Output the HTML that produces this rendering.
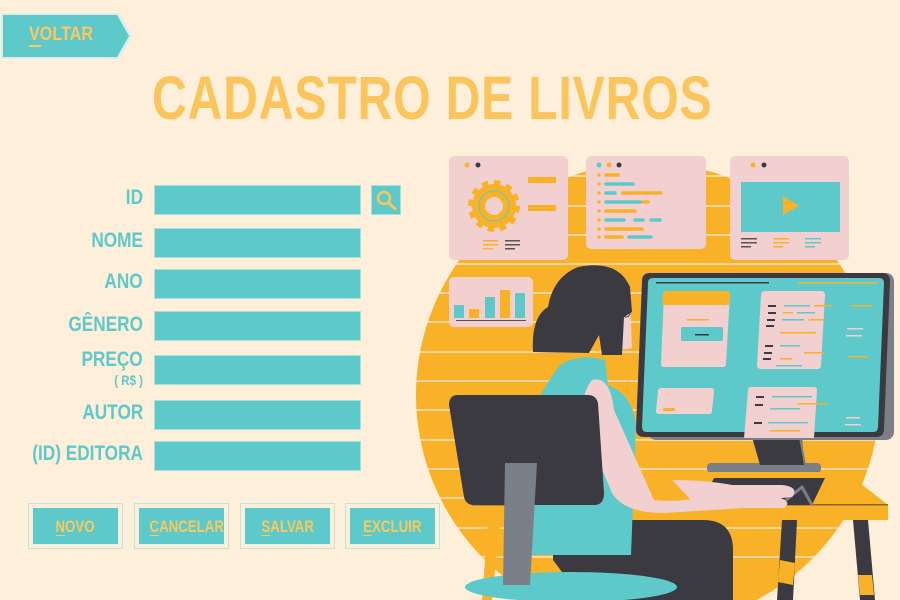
<!DOCTYPE html>
<html><head><meta charset="utf-8"><style>
*{margin:0;padding:0;box-sizing:border-box}
body{width:900px;height:600px;background:#FEEFDA;position:relative;overflow:hidden;font-family:"Liberation Sans Narrow","Liberation Sans",sans-serif}
.abs{position:absolute}
.lbl{position:absolute;right:757px;color:#5DC9CB;font-weight:bold;font-size:21px;white-space:nowrap;transform-origin:right center;transform:scaleX(.82)}
.inp{position:absolute;left:154px;width:207px;height:30px;background:#5DC9CB;border:1px solid #A8E0DE}
.btn{position:absolute;top:503px;width:95px;height:46px;border:1px solid #BFE3DE;background:#FEEFDA}
.btn div{position:absolute;left:3px;top:3px;right:3px;bottom:3px;background:#5DC9CB;border:1px solid #F4F0DC;color:#FBC95E;font-weight:bold;font-size:17px;text-align:center;line-height:38px;white-space:nowrap;overflow:hidden}
.btn span{display:inline-block;transform:scaleX(.78)}
u{text-decoration:underline;text-underline-offset:3px}
</style></head><body>
<svg class="abs" style="left:0;top:0" width="140" height="62"><polygon points="1,13 119,13 132,36 119,59 1,59" fill="#D9EFE8"/><polygon points="3,15 117,15 129,36 117,57 3,57" fill="#5DC9CB"/></svg>
<div class="abs" style="left:29px;top:24px;color:#FBC95E;font-weight:bold;font-size:19px;transform:scaleX(.85);transform-origin:left">VOLTAR</div>
<div class="abs" style="left:29px;top:45px;width:12px;height:2px;background:#FBC95E"></div>
<div class="abs" style="left:152px;top:63px;color:#FBC55E;font-weight:bold;font-size:61px;white-space:nowrap;transform:scaleX(.79);transform-origin:left;letter-spacing:1px">CADASTRO DE LIVROS</div>

<div class="lbl" style="top:186px">ID</div>
<div class="lbl" style="top:229px">NOME</div>
<div class="lbl" style="top:270px">ANO</div>
<div class="lbl" style="top:313px">GÊNERO</div>
<div class="lbl" style="top:348px">PREÇO</div>
<div class="lbl" style="top:372px;font-size:14px">( R$ )</div>
<div class="lbl" style="top:401px">AUTOR</div>
<div class="lbl" style="top:442px">(ID) EDITORA</div>

<div class="inp" style="top:185px"></div>
<div class="inp" style="top:228px"></div>
<div class="inp" style="top:269px"></div>
<div class="inp" style="top:311px"></div>
<div class="inp" style="top:355px"></div>
<div class="inp" style="top:400px"></div>
<div class="inp" style="top:441px"></div>
<div class="abs" style="left:371px;top:185px;width:30px;height:30px;background:#5DC9CB;border:1px solid #A8E0DE">
<svg width="30" height="30"><circle cx="12" cy="12" r="6" fill="none" stroke="#FBC55E" stroke-width="2.5"/><line x1="16.5" y1="16.5" x2="23" y2="23" stroke="#FBC55E" stroke-width="3" stroke-linecap="round"/></svg></div>

<div class="btn" style="left:28px"><div><span><u>N</u>OVO</span></div></div>
<div class="btn" style="left:134px"><div><span><u>C</u>ANCELAR</span></div></div>
<div class="btn" style="left:240px"><div><span><u>S</u>ALVAR</span></div></div>
<div class="btn" style="left:345px"><div><span><u>E</u>XCLUIR</span></div></div>

<svg class="abs" style="left:0;top:0" width="900" height="600">
<defs><clipPath id="c"><circle cx="648" cy="395" r="232"/></clipPath></defs>
<circle cx="648" cy="395" r="232" fill="#F9B128"/>
<g clip-path="url(#c)" stroke="#FCE3C2" stroke-width="1.5">
<line x1="400" y1="176" x2="900" y2="176"/><line x1="400" y1="206" x2="900" y2="206"/><line x1="400" y1="235" x2="900" y2="235"/><line x1="400" y1="264" x2="900" y2="264"/><line x1="400" y1="293" x2="900" y2="293"/><line x1="400" y1="322" x2="900" y2="322"/><line x1="400" y1="352" x2="900" y2="352"/><line x1="400" y1="381" x2="900" y2="381"/><line x1="400" y1="410" x2="900" y2="410"/><line x1="400" y1="440" x2="900" y2="440"/><line x1="400" y1="469" x2="900" y2="469"/><line x1="400" y1="498" x2="900" y2="498"/><line x1="400" y1="528" x2="900" y2="528"/><line x1="400" y1="557" x2="900" y2="557"/>
</g>
<rect x="449" y="156" width="119" height="104" rx="5" fill="#F2D0D0"/>
<rect x="586" y="156" width="120" height="93" rx="5" fill="#F2D0D0"/>
<rect x="730" y="156" width="119" height="104" rx="5" fill="#F2D0D0"/>
<rect x="449" y="277" width="84" height="50" rx="5" fill="#F2D0D0"/>
<circle cx="467" cy="165" r="2.5" fill="#F9B128"/><circle cx="478" cy="165" r="2.5" fill="#3A3A40"/>
<circle cx="494" cy="206" r="22" fill="#F9B128" stroke="#F9B128" stroke-width="8" stroke-dasharray="6 5.5"/>
<circle cx="494" cy="206" r="15" fill="none" stroke="#5DC9CB" stroke-width="1"/><circle cx="494" cy="206" r="9" fill="#F2D0D0"/>
<rect x="528" y="177" width="28" height="6" fill="#F9B128"/><rect x="528" y="205" width="28" height="6" fill="#F9B128"/>
<g fill="#F9B128"><rect x="483" y="240" width="15" height="1.5"/><rect x="483" y="244" width="15" height="1.5"/><rect x="483" y="248" width="10" height="1.5"/></g>
<g fill="#555"><rect x="505" y="240" width="15" height="1.5"/><rect x="505" y="244" width="15" height="1.5"/><rect x="505" y="248" width="10" height="1.5"/></g>
<circle cx="599" cy="165" r="2.5" fill="#5DC9CB"/><circle cx="609" cy="165" r="2.5" fill="#F9B128"/><circle cx="619" cy="165" r="2.5" fill="#3A3A40"/>
<g fill="#F9B128"><circle cx="599" cy="175" r="1.7"/><circle cx="599" cy="184" r="1.7"/><circle cx="599" cy="193" r="1.7"/><circle cx="599" cy="202" r="1.7"/><circle cx="599" cy="211" r="1.7"/><circle cx="599" cy="220" r="1.7"/><circle cx="599" cy="229" r="1.7"/><circle cx="599" cy="237" r="1.7"/></g>
<g stroke-linecap="round" stroke-width="3.5">
<path d="M606 175h12M643 202h5" stroke="#F9B128"/>
<path d="M606 184h27M606 193h9M606 202h34M606 220h18M635 220h8M651 220h9M629 237h22" stroke="#5DC9CB"/>
<path d="M623 193h38M606 211h29M606 229h36M606 237h16" stroke="#F9B128"/>
</g>
<circle cx="753" cy="165" r="2.5" fill="#F9B128"/><circle cx="764" cy="165" r="2.5" fill="#3A3A40"/>
<rect x="741" y="182" width="99" height="50" fill="#5DC9CB"/><polygon points="783,196 799,206 783,215" fill="#F9B128"/>
<g fill="#555"><rect x="741" y="238" width="16" height="1.5"/><rect x="741" y="242" width="16" height="1.5"/><rect x="741" y="246" width="10" height="1.5"/></g>
<g fill="#F9B128"><rect x="773" y="238" width="16" height="1.5"/><rect x="773" y="242" width="16" height="1.5"/><rect x="773" y="246" width="10" height="1.5"/></g>
<g fill="#5DC9CB"><rect x="805" y="238" width="16" height="1.5"/><rect x="805" y="242" width="16" height="1.5"/><rect x="805" y="246" width="10" height="1.5"/></g>
<rect x="454" y="305" width="10" height="13" fill="#5DC9CB"/><rect x="469" y="309" width="10" height="9" fill="#F9B128"/><rect x="485" y="297" width="10" height="21" fill="#5DC9CB"/><rect x="500" y="290" width="10" height="28" fill="#F9B128"/><rect x="515" y="293" width="10" height="25" fill="#5DC9CB"/>
<rect x="456" y="320" width="70" height="1" fill="#555"/>
<rect x="707" y="463" width="114" height="10" rx="4" fill="#7A7F88"/>
<polygon points="752,437 802,437 804,465 760,465" fill="#3A3A40"/>
<path d="M800 437l5 28" stroke="#7A7F88" stroke-width="2"/>
<rect x="648" y="273" width="246" height="167" rx="8" fill="#7A7F88"/>
<path d="M650 273h232q8 0 8 8l-6 148q0 8-8 8h-232q-8 0-8-8l6-148q0-8 8-8z" fill="#3A3A40"/>
<path d="M653 278h226q5 0 5 5l-6 144q0 5-5 5h-226q-5 0-5-5l6-144q0-5 5-5z" fill="#5DC9CB"/>
<rect x="656" y="282" width="113" height="1.5" fill="#3A3A40"/><rect x="798" y="282" width="80" height="1.5" fill="#F9B128"/>
<path d="M665 291h62q3 0 3 3l-4 70q0 3-3 3h-59q-3 0-3-3l3-70q0-3 3-3z" fill="#F2D0D0"/>
<path d="M665 291h62q3 0 3 3l-1 11h-67l1-11q0-3 3-3z" fill="#F9B128"/>
<rect x="681" y="327" width="42" height="14" rx="2" fill="#5DC9CB"/><rect x="695" y="334" width="14" height="1.5" fill="#3A3A40"/>
<path d="M765 291h56q4 0 4 4l-4 70q0 4-4 4h-56q-4 0-4-4l4-70q0-4 4-4z" fill="#F2D0D0"/>
<path d="M655 388h56q3 0 3 3l-2 20q0 3-3 3h-50q-3 0-3-3l2-20q0-3 3-3z" fill="#F2D0D0"/>
<path d="M753 387h61q3 0 3 3l-3 48h-70l4-48q0-3 3-3z" fill="#F2D0D0"/>
<g fill="#3A3A40"><rect x="768" y="305" width="8" height="2"/><rect x="768" y="312" width="8" height="2"/><rect x="767" y="319" width="8" height="2"/><rect x="766" y="325" width="8" height="2"/><rect x="765" y="345" width="8" height="2"/><rect x="764" y="352" width="8" height="2"/><rect x="763" y="358" width="8" height="2"/><rect x="756" y="396" width="8" height="2"/><rect x="755" y="404" width="8" height="2"/><rect x="754" y="422" width="8" height="2"/></g>
<g fill="#5DC9CB"><rect x="784" y="305" width="26" height="1.5"/><rect x="797" y="312" width="18" height="1.5"/><rect x="782" y="319" width="22" height="1.5"/><rect x="780" y="345" width="20" height="1.5"/><rect x="776" y="365" width="26" height="1.5"/><rect x="772" y="396" width="40" height="1.5"/><rect x="770" y="408" width="30" height="1.5"/><rect x="768" y="422" width="40" height="1.5"/></g>
<g fill="#F9B128"><rect x="814" y="305" width="18" height="1.5"/><rect x="783" y="312" width="10" height="1.5"/><rect x="808" y="319" width="16" height="1.5"/><rect x="780" y="332" width="36" height="1.5"/><rect x="804" y="352" width="20" height="1.5"/><rect x="780" y="358" width="12" height="1.5"/><rect x="797" y="403" width="30" height="1.5"/><rect x="770" y="430" width="30" height="1.5"/><rect x="851" y="305" width="22" height="1.5"/><rect x="848" y="356" width="20" height="1.5"/><rect x="687" y="319" width="22" height="1.5"/><rect x="663" y="408" width="12" height="3" rx="1.5"/></g>
<g fill="#F2D0D0"><rect x="847" y="328" width="16" height="1.5"/><rect x="846" y="335" width="16" height="1.5"/><rect x="846" y="417" width="14" height="1.5"/><rect x="845" y="424" width="16" height="1.5"/></g>
<polygon points="700,472 846,472 888,505 472,505" fill="#F9B128"/>
<rect x="472" y="505" width="416" height="15" fill="#F9B128"/><rect x="472" y="504" width="416" height="1.5" fill="#8A6A30"/>
<polygon points="488,520 500,520 492,600 482,600" fill="#F9B128"/>
<polygon points="782,520 797,520 793,600 777,600" fill="#3A3A40"/><polygon points="780,560 795,563 793,585 778,582" fill="#F9B128"/>
<polygon points="853,520 868,520 875,600 860,600" fill="#3A3A40"/><polygon points="858,575 872,575 874,595 860,595" fill="#F9B128"/>
<polygon points="714,478 825,478 812,505 700,505" fill="#3A3A40"/>
<path d="M780 505l22-18 10 18" fill="none" stroke="#7A7F88" stroke-width="3"/>
<path d="M553 520h150q30 0 30 30v50h-150l-30-40z" fill="#3A3A40"/>
<path d="M560 365q20-12 45-5l3 25q25 10 28 40l-5 130h-100q-6-40-8-80q-2-60 37-110z" fill="#5DC9CB"/>
<path d="M592 380q18-5 22 30l40 90q25 3 60-5l60 1q20 5 10 12l-40 0l-80 5q-40 0-52-20l-25-60q-10-35 5-53z" fill="#F2D0D0"/>
<path d="M672 480q35 0 60 5l50 0 q18 2 10 12l-40 4l-60 0z" fill="#F2D0D0"/>
<path d="M612 300h18l2 48l-16 3z" fill="#F2D0D0"/>
<path d="M533 352q-2-35 15-45q5-30 30-40q40-8 52 20l2 25l-8 5l-2 38l-20 0l-3-20l-10 18z" fill="#3A3A40"/>
<circle cx="626" cy="313" r="4" fill="none" stroke="#3A3A40" stroke-width="1"/>
<ellipse cx="571" cy="587" rx="106" ry="15" fill="#5DC9CB"/>
<path d="M458 395h130q8 0 10 8l6 90q0 12-10 12h-120q-8 0-10-8l-15-92q0-10 9-10z" fill="#3A3A40"/>
<polygon points="505,463 537,463 530,585 503,585" fill="#7A7F88"/>
</svg>
</body></html>
